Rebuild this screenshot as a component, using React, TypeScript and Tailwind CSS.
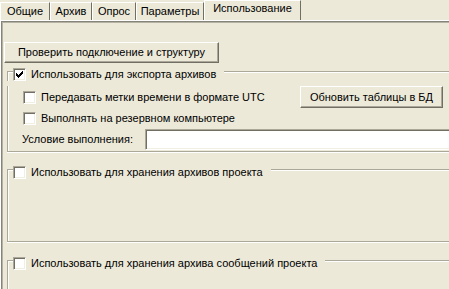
import React from "react";

function Check({ checked }: { checked?: boolean }) {
  return (
    <div className="w-[13px] h-[13px] shrink-0 bg-white border border-t-[#aca899] border-l-[#aca899] border-r-white border-b-white shadow-[inset_1px_1px_0_#716f64,inset_-1px_-1px_0_#f1efe2] flex items-center justify-center">
      {checked && (
        <svg width="7" height="7" viewBox="0 0 7 7" shapeRendering="crispEdges">
          <rect x="6" y="0" width="1" height="3" fill="#000" />
          <rect x="5" y="1" width="1" height="3" fill="#000" />
          <rect x="4" y="2" width="1" height="3" fill="#000" />
          <rect x="3" y="3" width="1" height="3" fill="#000" />
          <rect x="2" y="4" width="1" height="3" fill="#000" />
          <rect x="1" y="3" width="1" height="3" fill="#000" />
          <rect x="0" y="2" width="1" height="3" fill="#000" />
        </svg>
      )}
    </div>
  );
}

function Btn({ children, w, h }: { children: React.ReactNode; w: string; h: string }) {
  return (
    <div
      className={
        "shrink-0 flex items-center justify-center bg-[#ece9d8] border border-t-white border-l-white border-r-[#716f64] border-b-[#716f64] shadow-[inset_-1px_-1px_0_#aca899] whitespace-nowrap " +
        w +
        " " +
        h
      }
    >
      {children}
    </div>
  );
}

function GroupHeader({ label, checked }: { label: string; checked?: boolean }) {
  return (
    <div className="flex h-[13px]">
      <div className="w-[6px] mt-[3px] border-t border-l border-[#aca899] shadow-[inset_1px_1px_0_#fff]" />
      <Check checked={checked} />
      <span className="ml-[5px] self-center whitespace-nowrap">{label}</span>
      <div className="flex-1 ml-[8px] mt-[3px] h-[2px] border-t border-[#aca899] bg-white" />
    </div>
  );
}

const bodyCls =
  "border-l border-b border-[#aca899] shadow-[inset_1px_0_0_#fff,0_1px_0_#fff]";

export default function App() {
  const tabs = [
    { t: "Общие", w: "w-[50px]" },
    { t: "Архив", w: "w-[42px]" },
    { t: "Опрос", w: "w-[44px]" },
    { t: "Параметры", w: "w-[68px]" },
  ];
  return (
    <div className="w-[449px] h-[289px] overflow-hidden bg-[#ece9d8] text-black text-[11px] leading-none font-['Liberation_Sans',Arial,sans-serif] flex flex-col">
      <div className="flex h-[20px] items-end shrink-0">
        {tabs.map((x) => (
          <div
            key={x.t}
            className={
              "h-[18px] flex justify-center pt-[3px] border-t border-l border-r border-t-white border-l-white border-r-[#716f64] whitespace-nowrap " +
              x.w
            }
          >
            {x.t}
          </div>
        ))}
        <div className="h-[20px] w-[97px] flex justify-center pt-[2px] border-t border-l border-r border-t-white border-l-white border-r-[#716f64] whitespace-nowrap">
          Использование
        </div>
      </div>
      <div className="h-[1px] bg-white shrink-0" />
      <div className="flex-1 border-l border-white">
        <div className="h-full border-t border-l border-[#868478] shadow-[inset_1px_1px_0_#b5b2a4] pt-[20px]">
          <div className="ml-[2px]">
            <Btn w="w-[215px]" h="h-[21px]">
              Проверить подключение и структуру
            </Btn>
          </div>

          {/* Group 1 */}
          <div className="ml-[5px] w-[470px] mt-[5px]">
            <GroupHeader label="Использовать для экспорта архивов" checked />
            <div className={bodyCls + " pb-[1px]"}>
              <div className="flex items-center h-[22px] mt-[5px] pl-[15px]">
                <div className="flex items-center w-[277px]">
                  <Check />
                  <span className="ml-[5px] whitespace-nowrap">Передавать метки времени в формате UTC</span>
                </div>
                <Btn w="w-[143px]" h="h-[22px]">
                  Обновить таблицы в БД
                </Btn>
              </div>
              <div className="flex items-center h-[13px] mt-[4px] pl-[15px]">
                <Check />
                <span className="ml-[5px] whitespace-nowrap">Выполнять на резервном компьютере</span>
              </div>
              <div className="flex items-center h-[21px] mt-[4px] pl-[14px]">
                <span className="w-[123px] shrink-0 whitespace-nowrap">Условие выполнения:</span>
                <div className="flex-1 h-[21px] bg-white border border-t-[#aca899] border-l-[#aca899] border-r-white border-b-white shadow-[inset_1px_1px_0_#716f64,inset_-1px_-1px_0_#f1efe2]" />
              </div>
            </div>
          </div>

          {/* Group 2 */}
          <div className="ml-[5px] w-[470px] mt-[14px]">
            <GroupHeader label="Использовать для хранения архивов проекта" />
            <div className={bodyCls + " h-[63px]"} />
          </div>

          {/* Group 3 */}
          <div className="ml-[5px] w-[470px] mt-[15px]">
            <GroupHeader label="Использовать для хранения архива сообщений проекта" />
            <div className={bodyCls + " h-[40px]"} />
          </div>
        </div>
      </div>
    </div>
  );
}
